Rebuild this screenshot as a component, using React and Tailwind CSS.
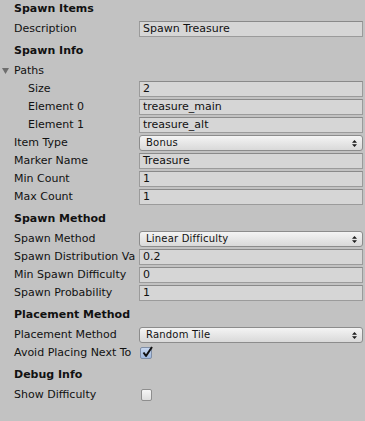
import React from "react";

// Unity-style inspector panel (light skin)
const font = { fontFamily: '"DejaVu Sans", Verdana, sans-serif' };

function Header({ children, first }) {
  return (
    <div
      className={
        first
          ? "pt-[1px] h-[19px] mb-[2px] pl-[14px] font-bold leading-[16px]"
          : "pt-[4px] h-[22px] mb-[2px] pl-[14px] font-bold leading-[16px]"
      }
    >
      {children}
    </div>
  );
}

function Row({ label, indent, children }) {
  return (
    <div className="flex items-center h-[16px] mb-[2px] pr-[2px]">
      <div
        className={
          indent
            ? "w-[139px] shrink-0 overflow-hidden whitespace-nowrap pl-[28px] leading-[16px]"
            : "w-[139px] shrink-0 overflow-hidden whitespace-nowrap pl-[14px] leading-[16px]"
        }
      >
        {label}
      </div>
      {children}
    </div>
  );
}

function TextField({ value }) {
  return (
    <div className="flex-1 h-[16px] bg-[#d6d6d6] border border-[#9b9b9b] border-t-[#8a8a8a] px-[3px] leading-[14px] overflow-hidden whitespace-nowrap">
      {value}
    </div>
  );
}

function Dropdown({ value }) {
  return (
    <div className="flex-1 h-[16px] flex items-center justify-between rounded-[3px] border border-[#8c8c8c] bg-gradient-to-b from-[#f4f4f4] to-[#d9d9d9] pl-[6px] pr-[5px] text-[10px] tracking-[0.2px]">
      <span className="leading-[14px]">{value}</span>
      <svg width="5" height="7" viewBox="0 0 5 7">
        <path d="M2.5 0 L5 2.8 H0 Z M0 4.2 H5 L2.5 7 Z" fill="#1c1c1c" />
      </svg>
    </div>
  );
}

function Checkbox({ checked }) {
  return (
    <div
      className={
        checked
          ? "relative ml-[1px] w-[12px] h-[12px] rounded-[2px] border border-[#7f8ea6] bg-gradient-to-b from-[#c6d6ee] to-[#9fb8de]"
          : "relative ml-[2px] w-[11px] h-[12px] rounded-[2px] border border-[#8e8e8e] bg-gradient-to-b from-[#f6f6f6] to-[#dedede]"
      }
    >
      {checked && (
        <svg
          className="absolute left-[1px] top-[-2px]"
          width="11"
          height="12"
          viewBox="0 0 11 12"
        >
          <path
            d="M1.5 6.5 L4 10 L10 1"
            stroke="#111"
            strokeWidth="2"
            fill="none"
            strokeLinejoin="round"
          />
        </svg>
      )}
    </div>
  );
}

export default function App() {
  return (
    <div
      className="min-h-screen w-[365px] bg-[#c2c2c2] text-[11px] text-[#111]"
      style={font}
    >
      <Header first>Spawn Items</Header>
      <Row label="Description">
        <TextField value="Spawn Treasure" />
      </Row>

      <Header>Spawn Info</Header>
      <div className="flex items-center h-[16px] mb-[2px]">
        <svg className="ml-[2px] mr-[5px]" width="7" height="6" viewBox="0 0 7 6">
          <path d="M0 0 H7 L3.5 6 Z" fill="#6e6e6e" />
        </svg>
        <span className="leading-[16px]">Paths</span>
      </div>
      <Row label="Size" indent>
        <TextField value="2" />
      </Row>
      <Row label="Element 0" indent>
        <TextField value="treasure_main" />
      </Row>
      <Row label="Element 1" indent>
        <TextField value="treasure_alt" />
      </Row>
      <Row label="Item Type">
        <Dropdown value="Bonus" />
      </Row>
      <Row label="Marker Name">
        <TextField value="Treasure" />
      </Row>
      <Row label="Min Count">
        <TextField value="1" />
      </Row>
      <Row label="Max Count">
        <TextField value="1" />
      </Row>

      <Header>Spawn Method</Header>
      <Row label="Spawn Method">
        <Dropdown value="Linear Difficulty" />
      </Row>
      <Row label="Spawn Distribution Va">
        <TextField value="0.2" />
      </Row>
      <Row label="Min Spawn Difficulty">
        <TextField value="0" />
      </Row>
      <Row label="Spawn Probability">
        <TextField value="1" />
      </Row>

      <Header>Placement Method</Header>
      <Row label="Placement Method">
        <Dropdown value="Random Tile" />
      </Row>
      <Row label="Avoid Placing Next To">
        <Checkbox checked />
      </Row>

      <Header>Debug Info</Header>
      <Row label="Show Difficulty">
        <Checkbox />
      </Row>
    </div>
  );
}
